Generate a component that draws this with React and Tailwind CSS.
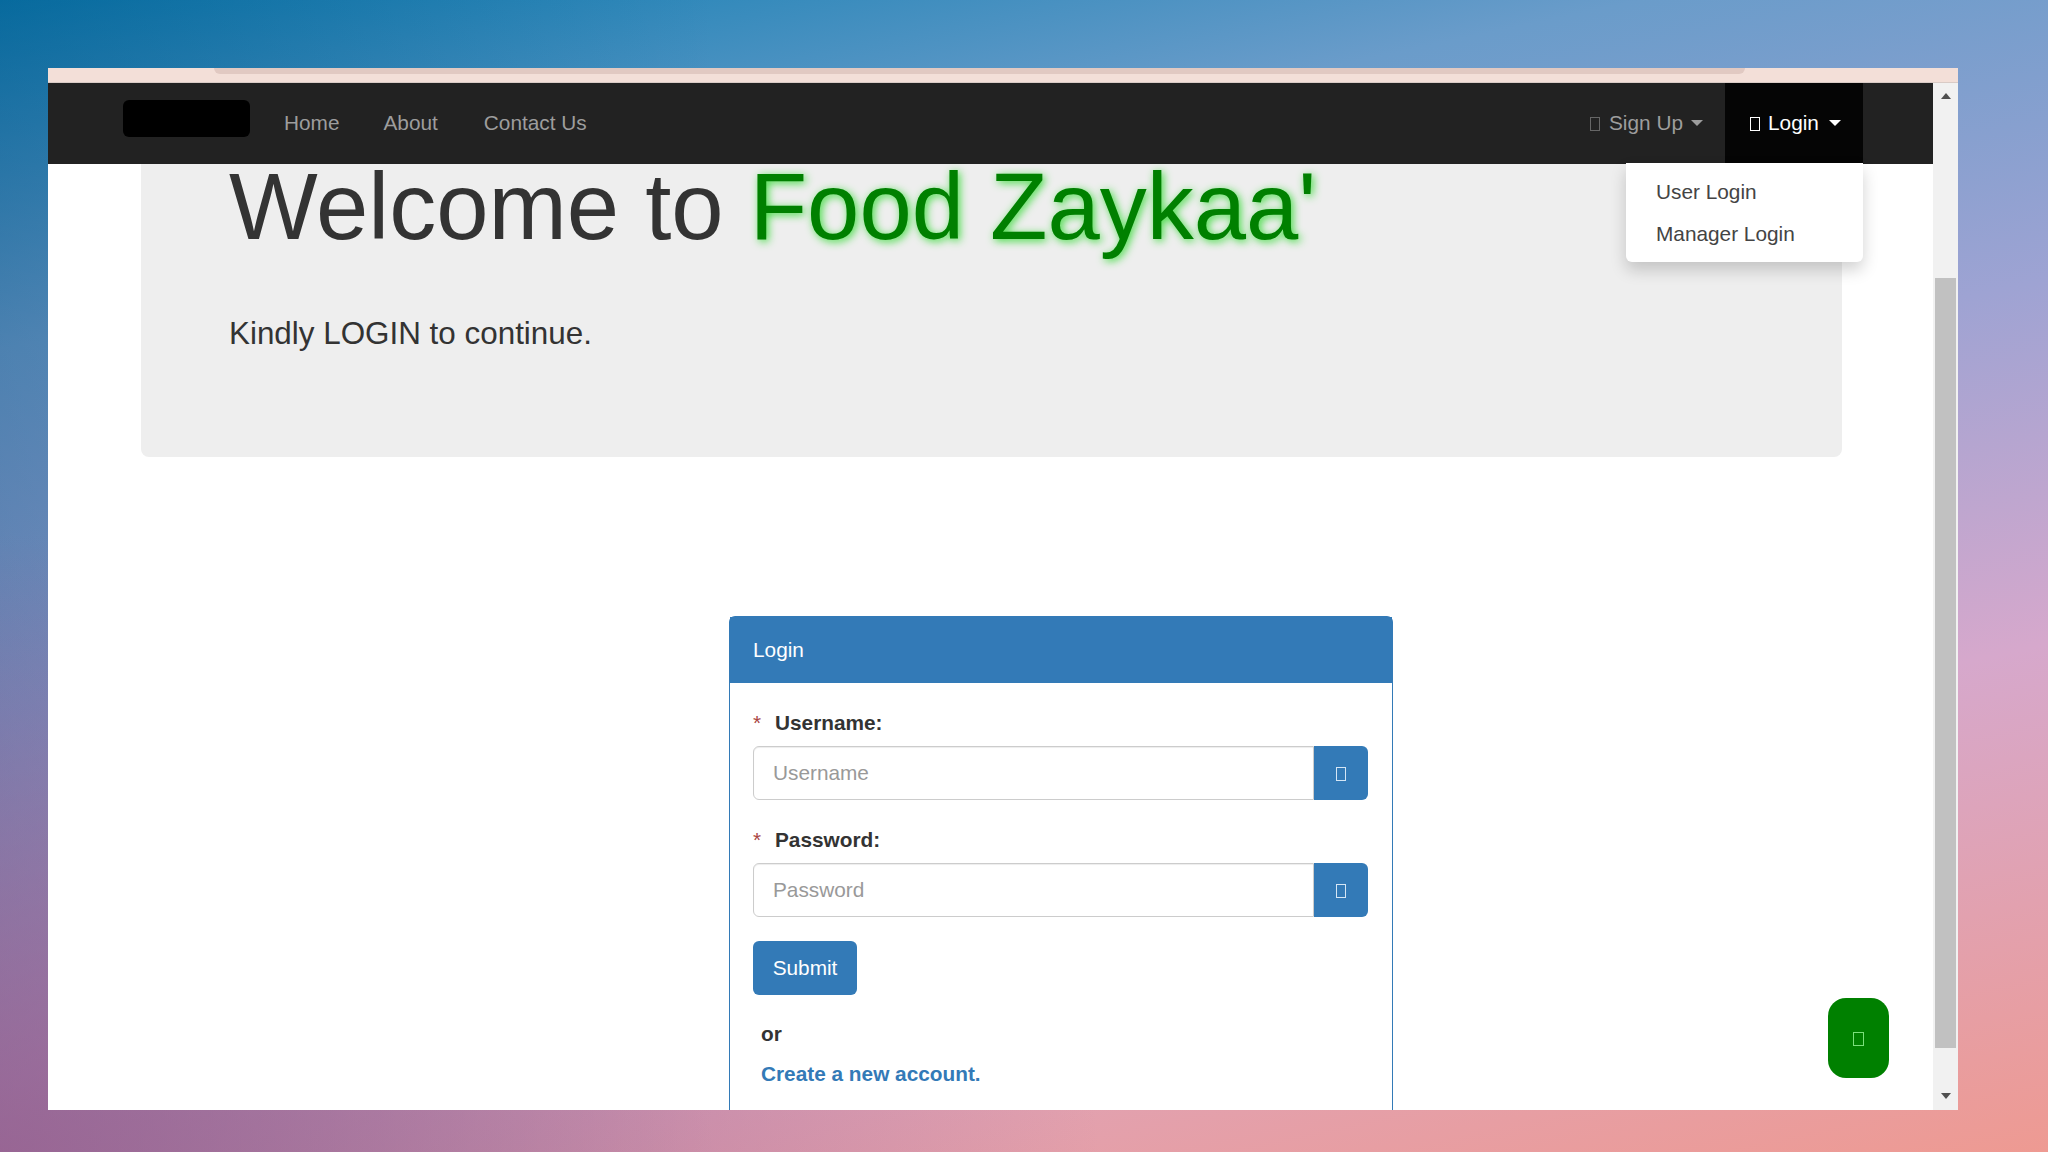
const Tofu = ({ className = "" }) => (
  <span className={`inline-block w-[10px] h-[14px] border border-current ${className}`} />
);

const Caret = ({ className = "" }) => (
  <span className={`inline-block w-0 h-0 border-x-[6px] border-x-transparent border-t-[6px] ${className}`} />
);

const Field = ({ label, placeholder, className = "" }) => (
  <div className={className}>
    <label className="flex items-center h-[24px] font-bold text-[#333]">
      <span className="w-[22px] font-normal text-[#a94442]">*</span>
      {label}
    </label>
    <div className="flex h-[54px] mt-[11px]">
      <input
        placeholder={placeholder}
        className="flex-1 min-w-0 px-[19px] bg-white border border-[#ccc] rounded-l-[6px] placeholder:text-[#999] shadow-[inset_0_1px_1px_rgba(0,0,0,0.075)]"
      />
      <div className="flex items-center justify-center w-[54px] mr-[1px] bg-[#337ab7] text-[#d5e6f5] rounded-r-[6px]">
        <Tofu className="mt-[2px]" />
      </div>
    </div>
  </div>
);

export default function App() {
  return (
    <div className="h-[1152px] overflow-hidden pt-[68px] pl-[48px] pr-[90px] font-['Liberation_Sans',Arial,sans-serif] text-[20.8px] bg-[radial-gradient(ellipse_at_0%_100%,rgba(150,90,140,0.75)_0%,rgba(150,90,140,0)_38%),linear-gradient(90deg,rgba(0,60,110,0.28)_0%,rgba(0,60,110,0)_35%),linear-gradient(168deg,#0a7cb0_0%,#6a9cca_22%,#9ea3d3_45%,#d6a8cc_68%,#ee9a92_100%)]">
      <div className="h-[1042px] bg-white overflow-hidden flex flex-col relative">
        {/* strip of the page behind */}
        <div className="h-[15px] shrink-0 bg-[#f3dfd8] border-b border-[#d9cbc6] pl-[166px] pr-[213px]">
          <div className="h-[6px] bg-[#e1c9c2] rounded-b-[8px]" />
        </div>

        <div className="flex flex-1 min-h-0">
          <div className="flex-1 min-w-0 flex flex-col">
            {/* Navbar */}
            <nav className="h-[81px] shrink-0 bg-[#222] flex items-stretch pl-[75px] pr-[70px]">
              <div className="w-[127px] h-[37px] mt-[17px] bg-black rounded-[6px] mr-[12px]" />
              <a className="flex items-center px-[22px] pb-[2px] text-[#9d9d9d]">Home</a>
              <a className="flex items-center px-[22px] pb-[2px] text-[#9d9d9d]">About</a>
              <a className="flex items-center pl-[24px] pr-[22px] pb-[2px] text-[#9d9d9d]">Contact Us</a>
              <div className="flex-1" />
              <a className="flex items-center gap-[8px] pl-[22px] pr-[22px] pb-[2px] text-[#9d9d9d]">
                <Tofu className="text-[#666] mt-[2px] mr-[1px]" />
                Sign Up
                <Caret className="border-t-[#9d9d9d]" />
              </a>
              <a className="flex items-center gap-[8px] w-[138px] pl-[25px] pb-[2px] bg-[#050505] text-white">
                <Tofu className="mt-[2px]" />
                Login
                <Caret className="border-t-white ml-[2px]" />
              </a>
            </nav>

            {/* Jumbotron */}
            <div className="ml-[93px] mr-[91px] h-[293px] shrink-0 bg-[#eee] rounded-b-[8px] pl-[88px]">
              <h1 className="text-[94px] leading-[86px] text-[#333] whitespace-nowrap">
                Welcome to{" "}
                <span className="text-[#008000] [text-shadow:2px_2px_8px_#3fdc3f]">Food Zaykaa'</span>
              </h1>
              <p className="mt-[64px] text-[31.4px] leading-[40px] text-[#333]">Kindly LOGIN to continue.</p>
            </div>

            {/* Login panel */}
            <div className="ml-[681px] w-[664px] mt-[159px] border border-[#337ab7] border-b-0 rounded-t-[6px] flex-1">
              <div className="h-[66px] bg-[#337ab7] text-white flex items-center px-[23px]">Login</div>
              <div className="px-[23px] pt-[28px]">
                <Field label="Username:" placeholder="Username" />
                <Field label="Password:" placeholder="Password" className="mt-[28px]" />
                <button className="block mt-[24px] w-[104px] h-[54px] bg-[#337ab7] text-white rounded-[6px]">
                  Submit
                </button>
                <p className="mt-[27px] ml-[8px] leading-[24px] font-bold text-[#333]">or</p>
                <a className="block mt-[16px] ml-[8px] leading-[24px] font-bold text-[#337ab7]">
                  Create a new account.
                </a>
              </div>
            </div>
          </div>

          {/* Scrollbar */}
          <div className="w-[25px] shrink-0 bg-[#f1f1f1] flex flex-col items-center">
            <div className="h-[26px] flex items-center justify-center">
              <span className="w-0 h-0 border-x-[5px] border-x-transparent border-b-[6px] border-b-[#505050]" />
            </div>
            <div className="w-[21px] mt-[169px] h-[770px] bg-[#c1c1c1]" />
            <div className="flex-1 flex items-end pb-[11px]">
              <span className="w-0 h-0 border-x-[5px] border-x-transparent border-t-[6px] border-t-[#505050]" />
            </div>
          </div>
        </div>

        {/* Login dropdown */}
        <div className="absolute left-[1578px] top-[95px] w-[237px] h-[99px] bg-white rounded-b-[6px] shadow-[0_8px_16px_rgba(0,0,0,0.18)] pt-[8px] pl-[30px] text-[#444]">
          <div className="leading-[41px]">User Login</div>
          <div className="leading-[41px] mt-[1px]">Manager Login</div>
        </div>

        {/* Floating button */}
        <div className="absolute left-[1780px] top-[930px] w-[61px] h-[80px] bg-[#008000] rounded-[18px] flex items-center justify-center text-[#7be07b]">
          <Tofu className="mt-[2px] w-[11px] h-[14px]" />
        </div>
      </div>
    </div>
  );
}
